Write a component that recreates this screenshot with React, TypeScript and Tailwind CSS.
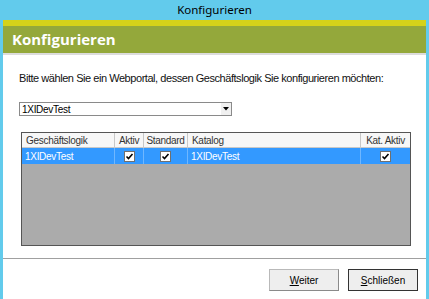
import React from "react";

const font = { fontFamily: "Tahoma, 'Liberation Sans', Arial, sans-serif" };

function Check() {
  return (
    <span className="inline-flex items-center justify-center w-[11px] h-[11px] bg-white border border-[#707070]">
      <svg width="9" height="9" viewBox="0 0 9 9">
        <path d="M1.5 4.5 L3.5 6.5 L7.5 2" stroke="#000" strokeWidth="1.6" fill="none" />
      </svg>
    </span>
  );
}

export default function App() {
  const cols = [
    { label: "Geschäftslogik", w: "w-[93px]", align: "justify-start pl-[4px]" },
    { label: "Aktiv", w: "w-[29px]", align: "justify-center" },
    { label: "Standard", w: "w-[44px]", align: "justify-center" },
    { label: "Katalog", w: "w-[173px]", align: "justify-start pl-[4px]" },
    { label: "Kat. Aktiv", w: "flex-1", align: "justify-center" },
  ];

  return (
    <div className="w-[429px] h-[299px] bg-[#62cbec] flex flex-col overflow-hidden" style={font}>
      {/* window title */}
      <div className="h-[20px] flex items-center justify-center text-[11.5px] text-black" style={{ fontFamily: "'Noto Sans', 'Liberation Sans', sans-serif" }}>
        Konfigurieren
      </div>

      <div className="mx-[3px] flex-1 bg-white flex flex-col">
        <div className="h-[6px] bg-[#d5d21a]" />
        <div className="h-[27px] bg-[#94a83b] flex items-center pl-[9px] text-white font-bold text-[15px]" style={{ fontFamily: "'Open Sans', 'Liberation Sans', sans-serif" }}>
          Konfigurieren
        </div>
        <div className="h-[2px] bg-[#dcdcdc]" />

        <div className="pl-[16px] pr-[15px] pt-[16px] flex flex-col">
          <div className="text-[11px] leading-[14px] text-[#111] tracking-[-0.45px]">
            Bitte wählen Sie ein Webportal, dessen Geschäftslogik Sie konfigurieren möchten:
          </div>

          {/* dropdown */}
          <div className="mt-[17px] w-[213px] h-[14px] border border-[#8a8a8a] flex items-stretch bg-white">
            <div className="flex-1 flex items-center pl-[2px] text-[10px] text-black tracking-[-0.3px]">1XIDevTest</div>
            <div className="w-[11px] bg-[#f0f0f0] border-l border-white flex items-center justify-center">
              <svg width="6" height="4" viewBox="0 0 6 4">
                <path d="M0 0 H6 L3 3.5 Z" fill="#000" />
              </svg>
            </div>
          </div>

          {/* grid */}
          <div className="mt-[16px] ml-[2px] w-[390px] h-[114px] border border-[#555] bg-[#ababab] flex flex-col">
            <div className="h-[15px] bg-[#f7f7f7] flex border-b border-[#c8c8c8]">
              {cols.map((c, i) => (
                <div
                  key={c.label}
                  className={`${c.w} ${c.align} flex items-center text-[10px] text-[#333] tracking-[-0.3px] ${i < cols.length - 1 ? "border-r border-[#c8c8c8]" : ""}`}
                >
                  {c.label}
                </div>
              ))}
            </div>
            <div className="h-[16px] bg-[#3399ff] flex text-white text-[10px] tracking-[-0.3px]">
              <div className="w-[93px] flex items-center pl-[3px] border-r border-[#6fb7ff]">1XIDevTest</div>
              <div className="w-[29px] flex items-center justify-center border-r border-[#6fb7ff]">
                <Check />
              </div>
              <div className="w-[44px] flex items-center justify-center border-r border-[#6fb7ff]">
                <Check />
              </div>
              <div className="w-[173px] flex items-center pl-[3px] border-r border-[#6fb7ff]">1XIDevTest</div>
              <div className="flex-1 flex items-center justify-center">
                <Check />
              </div>
            </div>
          </div>
        </div>

        <div className="mt-[12px] h-[1px] bg-[#a0a0a0]" />

        <div className="flex justify-end gap-[9px] pr-[8px] pt-[10px]">
          <button className="w-[70px] h-[22px] bg-[#eeeeee] border border-[#b9b9b9] border-r-[#8a8a8a] border-b-[#8a8a8a] text-[10px] text-black">
            <span className="underline">W</span>eiter
          </button>
          <button className="w-[70px] h-[22px] bg-[#eeeeee] border border-[#333] text-[10px] text-black">
            <span className="underline">S</span>chließen
          </button>
        </div>
      </div>
    </div>
  );
}
